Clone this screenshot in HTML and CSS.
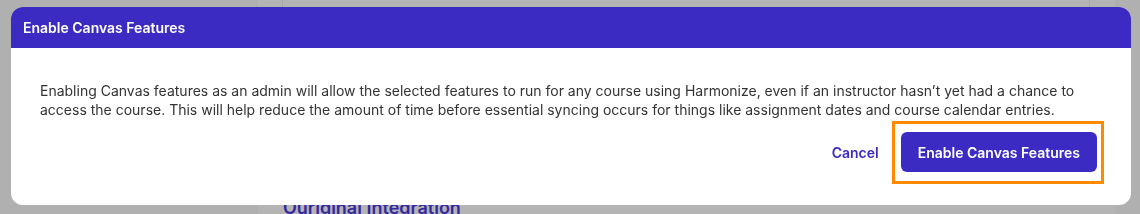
FILE: index.html
```html
<!DOCTYPE html>
<html lang="en">
<head>
    <meta charset="UTF-8">
    <meta name="viewport" content="width=device-width, initial-scale=1.0">
    <title>Enable Canvas Features</title>
    <link rel="stylesheet" href="styles.css">
</head>
<body>
    <!-- Pagina sotto l'overlay -->
    <div class="page">
        <div class="sidebar"></div>
        <div class="main">
            <div class="card"></div>
            <h3 class="section-title">Ouriginal Integration</h3>
        </div>
        <div class="rightbar"></div>
    </div>

    <!-- Modale -->
    <div class="modal">
        <div class="modal-header">Enable Canvas Features</div>
        <div class="modal-body">
            <p>Enabling Canvas features as an admin will allow the selected features to run for any course using Harmonize, even if an instructor hasn’t yet had a chance to access the course. This will help reduce the amount of time before essential syncing occurs for things like assignment dates and course calendar entries.</p>
            <div class="actions">
                <button class="cancel">Cancel</button>
                <span class="highlight">
                    <button class="confirm">Enable Canvas Features</button>
                </span>
            </div>
        </div>
    </div>
</body>
</html>
```

FILE: styles.css
```css
body {
    font-family: Inter, "Noto Sans", sans-serif;
    background-color: #b0b0b0;
    margin: 0;
    padding: 0;
    height: 214px;
    overflow: hidden;
}
.page {
    display: flex;
    height: 214px;
}
.sidebar {
    width: 258px;
    background-color: #b0b0b0;
}
.main {
    width: 857px;
    background-color: #b4b4b4;
    padding-left: 24px;
    box-sizing: border-box;
}
.card {
    width: 808px;
    height: 150px;
    border-left: 1px solid #a8a8a8;
    border-right: 1px solid #a8a8a8;
    box-sizing: border-box;
}
.section-title {
    margin: 47px 0 0 1px;
    font-size: 18px;
    font-weight: 600;
    color: #34289f;
}
.rightbar {
    flex: 1;
    background-color: #b0b0b0;
}
.modal {
    position: fixed;
    top: 7px;
    left: 11px;
    width: 1120px;
    background-color: #ffffff;
    border-radius: 12px;
    overflow: hidden;
}
.modal-header {
    background-color: #3c2bc3;
    color: #ffffff;
    font-size: 14px;
    font-weight: 600;
    height: 41px;
    line-height: 41px;
    padding: 0 12px;
}
.modal-body {
    padding: 33px 27px 21px 29px;
}
.modal-body p {
    margin: 0;
    font-size: 14px;
    line-height: 19px;
    color: #333333;
}
.actions {
    display: flex;
    justify-content: flex-end;
    align-items: center;
    margin-top: 2px;
}
.cancel {
    font-family: inherit;
    font-size: 14px;
    font-weight: 600;
    color: #3c2bc3;
    background: none;
    border: none;
    padding: 0;
    margin-right: 13px;
    cursor: pointer;
}
.highlight {
    display: flex;
    border: 3px solid #ff8a00;
    padding: 8px 4px 9px 6px;
}
.confirm {
    font-family: inherit;
    font-size: 14px;
    font-weight: 600;
    color: #ffffff;
    background-color: #3c2bc3;
    border: none;
    border-radius: 6px;
    height: 40px;
    padding: 0 17px;
    cursor: pointer;
}
```
